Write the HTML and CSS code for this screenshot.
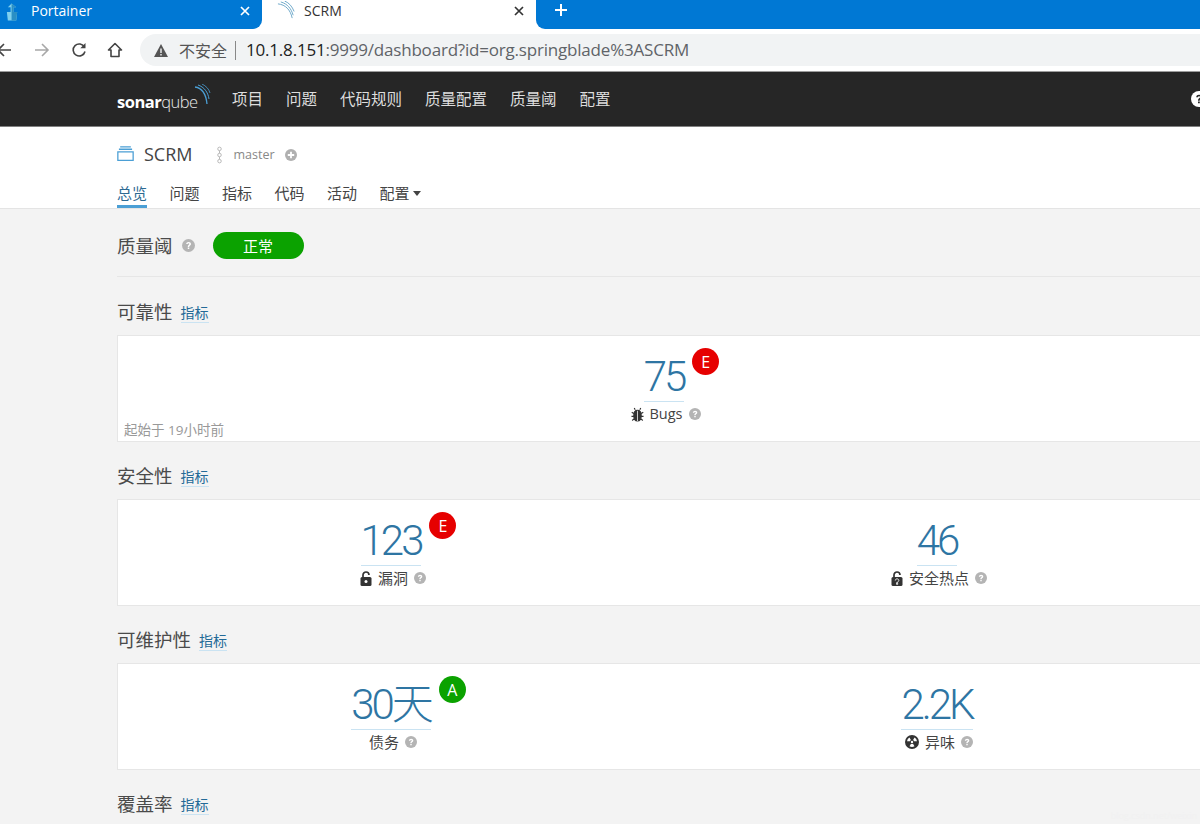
FILE: index.html
```html
<!DOCTYPE html>
<html lang="zh">
<head>
<meta charset="utf-8">
<title>SCRM</title>
<link rel="stylesheet" href="styles.css">
</head>
<body>
<div class="tabstrip">
  <div class="tab tab-off">
    <svg class="fav" viewBox="0 0 16 18"><path d="M7 0 3 4h3v5H2l1 9h9l1-9H9V4h3z" fill="#7fd0ee"/><path d="M7 0v18h5l1-9H9V4h3z" fill="#2a8fc4"/></svg>
    <span class="tab-title">Portainer</span>
    <svg class="tab-x" viewBox="0 0 12 12"><path d="M2 2l8 8M10 2l-8 8" stroke="#fff" stroke-width="1.7"/></svg>
  </div>
  <div class="tab tab-on">
    <svg class="fav fav-wave" viewBox="0 0 20 20"><g fill="none" stroke="#6aa6c8" stroke-width="1"><path d="M1 3c8 1 13 6 15 15"/><path d="M4 1c7 2 11 7 13 14"/><path d="M8 0c5 2 8 6 10 11"/></g></svg>
    <span class="tab-title dark">SCRM</span>
    <svg class="tab-x" viewBox="0 0 12 12"><path d="M2 2l8 8M10 2l-8 8" stroke="#333" stroke-width="1.7"/></svg>
  </div>
  <div class="tab tab-rest">
    <svg class="newtab" viewBox="0 0 14 14"><path d="M7 1v12M1 7h12" stroke="#fff" stroke-width="2"/></svg>
  </div>
</div>
<div class="toolbar">
  <svg class="tb-ico back" viewBox="0 0 16 16"><path d="M15 8H2M8 2 2 8l6 6" fill="none" stroke="#444" stroke-width="1.6"/></svg>
  <svg class="tb-ico fwd" viewBox="0 0 16 16"><path d="M1 8h13M8 2l6 6-6 6" fill="none" stroke="#a8a8a8" stroke-width="1.6"/></svg>
  <svg class="tb-ico reload" viewBox="0 0 16 16"><path d="M13.5 5.2A6 6 0 1 0 14 9.5" fill="none" stroke="#444" stroke-width="1.6"/><path d="M14.5 1v5.2H9.3z" fill="#444"/></svg>
  <svg class="tb-ico home" viewBox="0 0 16 16"><path d="M8 1.5 1.5 8H4v6.5h8V8h2.5z" fill="none" stroke="#444" stroke-width="1.6" stroke-linejoin="round"/></svg>
  <div class="omnibox">
    <svg class="warn" viewBox="0 0 14 13"><path d="M7 0 14 13H0z" fill="#555"/><path d="M6.3 4.500h1.400v4.500H6.300zM6.300 10h1.400v1.400H6.300z" fill="#f1f3f4"/></svg>
    <span class="insecure">不安全</span>
    <span class="omni-sep"></span>
    <span class="url"><span class="host">10.1.8.151</span>:9999/dashboard?id=org.springblade%3ASCRM</span>
  </div>
</div>
<div class="page">
  <header class="topnav">
    <div class="wrap topnav-row">
      <div class="brand">
        <span class="logo"><b>sonar</b>qube</span>
        <svg class="logo-wave" viewBox="0 0 16 22"><g fill="none" stroke="#4b9fd5"><path d="M0 3c7 1 11 7 12 17" stroke-width="1.300"/><path d="M3 1c6 2 10 7 11 14" stroke-width="1"/><path d="M7 0c4 2 7 5 8 9" stroke-width=".8"/></g></svg>
      </div>
      <nav class="mainnav">
        <a>项目</a><a>问题</a><a>代码规则</a><a>质量配置</a><a>质量阈</a><a>配置</a>
      </nav>
      <svg class="help-top" viewBox="0 0 16 16"><circle cx="8" cy="8" r="8" fill="#fff"/><path d="M5.200 6.200C5.400 4.600 6.500 3.800 8 3.800c1.700 0 2.900 1 2.900 2.300 0 1.900-2.200 1.900-2.200 3.600H7c0-2.600 2-2.500 2-3.500 0-.5-.4-.9-1-.9s-1 .4-1.100 1zM7 10.500h1.800v1.800H7z" fill="#262626"/></svg>
    </div>
  </header>
  <div class="subhead">
    <div class="wrap">
      <div class="crumbs">
        <svg class="qualifier" viewBox="0 0 16 14"><path d="M3 .8h10M1.800 3h12.400M.8 5.500h14.400v8H.8z" fill="none" stroke="#4b9fd5" stroke-width="1.200"/></svg>
        <span class="project">SCRM</span>
        <svg class="branch" viewBox="0 0 8 20"><g fill="none" stroke="#b5b5b5" stroke-width="1.100"><circle cx="4" cy="3" r="2"/><circle cx="4" cy="10" r="2"/><circle cx="4" cy="17" r="2"/><path d="M4 5v3M4 12v3"/></g></svg>
        <span class="branch-name">master</span>
        <svg class="plus" viewBox="0 0 12 12"><circle cx="6" cy="6" r="6" fill="#b0b0b0"/><path d="M6 2.800v6.400M2.800 6h6.400" stroke="#fff" stroke-width="1.800"/></svg>
      </div>
      <nav class="subnav">
        <a class="current">总览</a><a>问题</a><a>指标</a><a>代码</a><a>活动</a><a>配置<i class="caret"></i></a>
      </nav>
    </div>
  </div>
  <main class="wrap">
    <div class="gate">
      <h2>质量阈</h2>
      <svg class="q q-gate" viewBox="0 0 12 12"><use href="#qmark"/></svg>
      <span class="gate-ok">正常</span>
    </div>

    <div class="sec-head"><h3>可靠性</h3><a class="sec-link">指标</a></div>
    <section class="card one">
      <div class="measure">
        <div class="num-row"><a class="num">75</a><span class="rating red">E</span></div>
        <div class="label">
          <svg class="m-ico bug" viewBox="0 0 14 16"><path d="M7 3.500c2.600 0 4 2 4 5.500s-1.700 6-4 6-4-2.500-4-6 1.400-5.500 4-5.500zM4.500 3 3.500 1M9.500 3l1-2M3 7 .8 5.500M11 7l2.200-1.500M3 10H.5M11 10h2.500M3.500 12.500 1.300 14.500M10.500 12.500l2.200 2" fill="#333" stroke="#333" stroke-width="1.200"/><path d="M7 4v11" stroke="#fff" stroke-width=".8"/></svg>
          <span class="latin">Bugs</span>
          <svg class="q" viewBox="0 0 12 12"><use href="#qmark"/></svg>
        </div>
      </div>
      <span class="since">起始于 19小时前</span>
    </section>

    <div class="sec-head"><h3>安全性</h3><a class="sec-link">指标</a></div>
    <section class="card two">
      <div class="measure">
        <div class="num-row"><a class="num">123</a><span class="rating red">E</span></div>
        <div class="label">
          <svg class="m-ico lock" viewBox="0 0 12 15"><path d="M3 6.500V4a3 3 0 0 1 6 0" fill="none" stroke="#333" stroke-width="1.700"/><rect x=".5" y="6" width="11" height="9" rx="1.500" fill="#333"/><circle cx="6" cy="10.500" r="1.500" fill="#fff"/></svg>
          <span>漏洞</span>
          <svg class="q" viewBox="0 0 12 12"><use href="#qmark"/></svg>
        </div>
      </div>
      <div class="measure">
        <div class="num-row"><a class="num">46</a></div>
        <div class="label">
          <svg class="m-ico lock" viewBox="0 0 12 15"><path d="M3 6.500V4a3 3 0 0 1 6 0" fill="none" stroke="#333" stroke-width="1.700"/><rect x=".5" y="6" width="11" height="9" rx="1.500" fill="#333"/><path d="M4.300 9.500c0-2.200 3.500-2.200 3.500 0 0 1-1.200 1.100-1.200 2H5.500M5.500 12.300h1.200v1H5.500z" fill="none" stroke="#fff" stroke-width=".9"/></svg>
          <span>安全热点</span>
          <svg class="q" viewBox="0 0 12 12"><use href="#qmark"/></svg>
        </div>
      </div>
    </section>

    <div class="sec-head"><h3>可维护性</h3><a class="sec-link">指标</a></div>
    <section class="card two">
      <div class="measure">
        <div class="num-row"><a class="num">30天</a><span class="rating green">A</span></div>
        <div class="label">
          <span>债务</span>
          <svg class="q" viewBox="0 0 12 12"><use href="#qmark"/></svg>
        </div>
      </div>
      <div class="measure">
        <div class="num-row"><a class="num">2.2K</a></div>
        <div class="label">
          <svg class="m-ico smell" viewBox="0 0 14 14"><circle cx="7" cy="7" r="7" fill="#333"/><circle cx="7" cy="7" r="1.200" fill="#fff"/><path d="M2 6.300a5 5 0 0 1 2.500-3.700l1.400 2.500a2 2 0 0 0-.9 1.200zM12 6.300a5 5 0 0 0-2.500-3.700L8.100 5.100a2 2 0 0 1 .9 1.200zM4.500 11.300a5 5 0 0 0 5 0L8 8.800a2 2 0 0 1-2 0z" fill="#fff"/></svg>
          <span>异味</span>
          <svg class="q" viewBox="0 0 12 12"><use href="#qmark"/></svg>
        </div>
      </div>
    </section>

    <div class="sec-head"><h3>覆盖率</h3><a class="sec-link">指标</a></div>
  </main>
</div>
<span class="watermark">blog.csdn.net/weixin</span>
<svg class="defs" aria-hidden="true"><defs><g id="qmark"><circle cx="6" cy="6" r="6" fill="#b4b4b4"/><path d="M3.800 4.700C4 3.400 4.900 2.700 6.100 2.700c1.300 0 2.200.8 2.200 1.800 0 1.500-1.700 1.500-1.700 2.800H5.300c0-2 1.500-1.900 1.500-2.700 0-.4-.3-.7-.7-.7-.5 0-.8.300-.9.800zM5.300 7.900h1.400v1.400H5.300z" fill="#fff"/></g></defs></svg>
</body>
</html>
```

FILE: styles.css
```css
* { box-sizing: border-box; }
html, body { margin: 0; padding: 0; height: 824px; overflow: hidden; }
body {
  width: 1200px;
  position: relative;
  background: #f3f3f3;
  color: #444;
  font-family: "Open Sans", "Noto Sans CJK SC", sans-serif;
}
.defs { display: none; }

.tabstrip {
  height: 29px;
  background: #fff;
  display: flex;
  overflow: hidden;
}
.tab { height: 29px; display: flex; align-items: center; flex: none; padding-bottom: 8px; }
.tab-off { width: 262px; padding-left: 5px; color: #fff; background: #0078d4; border-radius: 0 0 9px 0; }
.tab-on { width: 274px; padding-left: 15px; background: #fff; }
.tab-rest { flex: 1; background: #0078d4; border-radius: 0 0 0 9px; }
.fav { width: 15px; height: 18px; flex: none; margin-top: 2px; }
.fav-wave { width: 19px; height: 19px; margin-top: 0; }
.tab-title { font-size: 14px; margin-left: 11px; flex: 1; }
.tab-title.dark { color: #333; margin-left: 8px; }
.tab-x { width: 12px; height: 12px; margin-right: 11px; }
.newtab { width: 14px; height: 14px; margin-left: 18px; margin-top: -2px; }

.toolbar {
  height: 43px;
  background: #fff;
  display: flex;
  align-items: center;
  border-bottom: 1px solid #9c9c9c;
}
.tb-ico { width: 16px; height: 16px; flex: none; }
.back { margin-left: -4px; }
.fwd { margin-left: 22px; }
.reload { margin-left: 21px; }
.home { margin-left: 20px; }
.omnibox {
  flex: 1;
  height: 32px;
  margin-left: 17px;
  background: #f1f3f4;
  border-radius: 16px 0 0 16px;
  display: flex;
  align-items: center;
  padding-left: 14px;
}
.warn { width: 14px; height: 13px; flex: none; }
.insecure { font-size: 16px; color: #555; margin-left: 11px; }
.omni-sep { width: 1px; height: 19px; background: #888; margin: 0 10px 0 8px; }
.url { font-size: 17px; color: #5f6368; white-space: nowrap; letter-spacing: -.2px; margin-bottom: 2px; }
.host { color: #222; }

.page { width: 1328px; }
.wrap { width: 1094px; margin-left: 117px; }

.topnav { height: 55px; background: #262626; border-bottom: 1px solid #808080; }
.topnav-row { display: flex; align-items: center; height: 54px; }
.brand { display: flex; align-items: flex-start; width: 115px; flex: none; }
.logo { font-size: 16.500px; color: #e8e8e8; font-weight: 300; letter-spacing: -.5px; line-height: 22px; margin-top: 6px; }
.logo b { font-weight: 700; color: #fff; }
.logo-wave { width: 22px; height: 22px; margin-left: -6px; margin-top: -1px; flex: none; }
.mainnav { display: flex; gap: 23px; }
.mainnav a { font-size: 15.500px; color: #ddd; line-height: 20px; }
.help-top { width: 16px; height: 16px; margin-left: auto; margin-right: 4px; flex: none; }

.subhead { height: 82px; background: #fff; border-bottom: 1px solid #e4e4e4; }
.crumbs { display: flex; align-items: center; height: 56px; padding-bottom: 1px; }
.qualifier { width: 17px; height: 15px; flex: none; margin-top: -2px; }
.project { font-size: 18px; color: #444; margin-left: 10px; line-height: 24px; margin-bottom: 2px; }
.branch { width: 7px; height: 20px; margin-left: 23px; flex: none; }
.branch-name { font-size: 12.500px; color: #888; margin-left: 11px; }
.plus { width: 12px; height: 12px; margin-left: 10px; flex: none; }
.subnav { display: flex; gap: 22.500px; height: 25px; }
.subnav a { font-size: 15px; line-height: 20px; color: #444; height: 25px; border-bottom: 3px solid transparent; display: flex; align-items: flex-start; }
.subnav a.current { border-bottom-color: #4b9fd5; color: #2d6a92; }
.caret { width: 0; height: 0; border: 4.500px solid transparent; border-top: 5px solid #444; border-bottom: 0; margin: 8px 0 0 3px; }

.gate { height: 68px; display: flex; align-items: center; border-bottom: 1px solid #e6e6e6; padding-top: 6px; margin-bottom: 1px; }
.gate h2 { margin: 0; font-size: 18.500px; font-weight: 400; color: #4a4a4a; line-height: 24px; }
.q { width: 12px; height: 12px; flex: none; margin-left: 6px; }
.q-gate { width: 13px; height: 13px; margin-left: 9px; }
.gate-ok {
  width: 91px; height: 27px; margin-left: 18px; border-radius: 14px;
  background: #0ba200; color: #fff; font-size: 15px;
  display: flex; align-items: center; justify-content: center;
}

.sec-head { height: 57px; display: flex; align-items: flex-end; padding-bottom: 10px; }
.sec-head h3 { margin: 0; font-size: 18.500px; font-weight: 400; color: #4a4a4a; line-height: 26px; }
.sec-link { font-size: 14px; color: #236a97; border-bottom: 1px solid #cae3f2; line-height: 18px; margin-left: 8px; margin-bottom: 2px; }

.card {
  height: 107px;
  background: #fff;
  border: 1px solid #e6e6e6;
  position: relative;
  display: grid;
  align-items: start;
  justify-items: center;
}
.card.one { grid-template-columns: 1fr; }
.card.two { grid-template-columns: 1fr 1fr; }
.measure { display: flex; flex-direction: column; align-items: center; padding-top: 13px; }
.num-row { position: relative; }
.num {
  display: block;
  font-family: Roboto, "Noto Sans CJK SC", sans-serif;
  font-size: 42px;
  font-weight: 300;
  letter-spacing: -3px;
  line-height: 48px;
  padding-top: 4px;
  color: #2e75a3;
  border-bottom: 1px solid #cae3f2;
}
.rating {
  position: absolute;
  left: 100%;
  top: -1px;
  margin-left: 8px;
  width: 27px;
  height: 27px;
  border-radius: 50%;
  color: #fff;
  font-size: 16px;
  display: flex;
  align-items: center;
  justify-content: center;
}
.red { background: #e60000; }
.green { background: #0ba200; }
.label { display: flex; align-items: center; font-size: 15px; color: #444; line-height: 20px; margin-top: 2px; padding-left: 4px; }
.latin { font-size: 14.500px; }
.m-ico { flex: none; margin-right: 6px; }
.bug { width: 13px; height: 15px; margin-right: 5px; }
.lock { width: 12px; height: 15px; }
.smell { width: 14px; height: 14px; }
.since { position: absolute; left: 6px; bottom: 2px; font-size: 13.500px; line-height: 18px; color: #999; }

.watermark { position: absolute; right: 3px; bottom: 2px; font-size: 9px; color: #f1f1f1; }
```
